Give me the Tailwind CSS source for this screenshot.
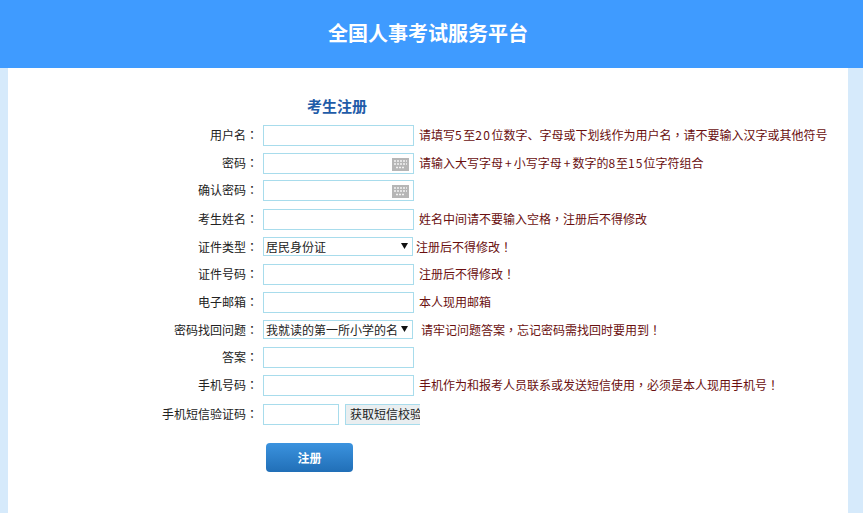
<!DOCTYPE html>
<html lang="zh-CN">
<head>
    <meta charset="UTF-8">
    <title>全国人事考试服务平台</title>
    <script src="https://cdn.jsdelivr.net/npm/@tailwindcss/browser@4"></script>
</head>
<body class="h-[513px] overflow-hidden bg-[#d6eafb] font-['Noto_Sans_CJK_SC',sans-serif] text-[12px] text-[#222]">
    <!-- Header -->
    <div class="h-[68px] bg-[#3f9bff] flex items-center justify-center pr-[7px] pb-[2px]">
        <h1 class="text-[20px] font-bold text-white">全国人事考试服务平台</h1>
    </div>

    <!-- Main panel -->
    <div class="ml-[8px] w-[840px] h-[445px] bg-white">
        <h2 class="pl-[299px] pt-[27px] h-[57px] text-[15px] leading-[22px] font-bold text-[#1f5ca8]">考生注册</h2>

        <form class="flex flex-col">
            <div class="flex items-center h-[21px]">
                <label class="w-[250px] pb-[2px] text-right">用户名<span lang="zh-TW" class="font-['Noto_Sans_CJK_TC']">：</span></label>
                <input type="text" class="ml-[5px] w-[151px] h-[21px] border border-[#a8dcec] outline-none">
                <span class="ml-[5px] pb-[2px] text-[#6a0f0f]">请填写<span class="tracking-[1.500px]">5</span>至<span class="tracking-[1.500px]">20</span>位数字、字母或下划线作为用户名<span lang="zh-TW" class="font-['Noto_Sans_CJK_TC']">，</span>请不要输入汉字或其他符号</span>
            </div>

            <div class="flex items-center h-[21px] mt-[7px]">
                <label class="w-[250px] pb-[2px] text-right">密码<span lang="zh-TW" class="font-['Noto_Sans_CJK_TC']">：</span></label>
                <div class="relative ml-[5px] w-[151px] h-[21px]">
                    <input type="password" class="w-full h-full border border-[#a8dcec] outline-none">
                    <svg class="absolute left-[129px] top-[5px]" width="17" height="13" viewBox="0 0 17 13">
                        <rect width="17" height="13" fill="#b6b6b6"/>
                        <path d="M2 3h13M2 6h13M4 9.500h9" stroke="#f2f2f2" stroke-width="1.500" stroke-dasharray="2 1"/>
                    </svg>
                </div>
                <span class="ml-[5px] pb-[2px] text-[#6a0f0f]">请输入大写字母<span class="tracking-[2px] pl-[2px]">+</span>小写字母<span class="tracking-[2px] pl-[2px]">+</span>数字的<span class="tracking-[1px]">8</span>至<span class="tracking-[1px]">15</span>位字符组合</span>
            </div>

            <div class="flex items-center h-[21px] mt-[6px]">
                <label class="w-[250px] pb-[1px] text-right">确认密码<span lang="zh-TW" class="font-['Noto_Sans_CJK_TC']">：</span></label>
                <div class="relative ml-[5px] w-[151px] h-[21px]">
                    <input type="password" class="w-full h-full border border-[#a8dcec] outline-none">
                    <svg class="absolute left-[129px] top-[5px]" width="17" height="13" viewBox="0 0 17 13">
                        <rect width="17" height="13" fill="#b6b6b6"/>
                        <path d="M2 3h13M2 6h13M4 9.500h9" stroke="#f2f2f2" stroke-width="1.500" stroke-dasharray="2 1"/>
                    </svg>
                </div>
            </div>

            <div class="flex items-center h-[21px] mt-[8px]">
                <label class="w-[250px] pb-[2px] text-right">考生姓名<span lang="zh-TW" class="font-['Noto_Sans_CJK_TC']">：</span></label>
                <input type="text" class="ml-[5px] w-[151px] h-[21px] border border-[#a8dcec] outline-none">
                <span class="ml-[5px] pb-[2px] text-[#6a0f0f]">姓名中间请不要输入空格<span lang="zh-TW" class="font-['Noto_Sans_CJK_TC']">，</span>注册后不得修改</span>
            </div>

            <div class="flex items-center h-[19px] mt-[7px]">
                <label class="w-[250px] text-right">证件类型<span lang="zh-TW" class="font-['Noto_Sans_CJK_TC']">：</span></label>
                <div class="relative ml-[5px] w-[150px] h-[19px]">
                    <select class="appearance-none w-full h-full border border-[#a8dcec] pl-[2px] pr-[15px] pb-[2px] text-[#222] outline-none">
                        <option>居民身份证</option>
                    </select>
                    <svg class="absolute left-[138px] top-[6px]" width="7" height="6" viewBox="0 0 7 6"><path d="M0 0h7L3.500 6z" fill="#111"/></svg>
                </div>
                <span class="ml-[3px] text-[#6a0f0f]">注册后不得修改<span lang="zh-TW" class="font-['Noto_Sans_CJK_TC']">！</span></span>
            </div>

            <div class="flex items-center h-[21px] mt-[8px]">
                <label class="w-[250px] pb-[2px] text-right">证件号码<span lang="zh-TW" class="font-['Noto_Sans_CJK_TC']">：</span></label>
                <input type="text" class="ml-[5px] w-[151px] h-[21px] border border-[#a8dcec] outline-none">
                <span class="ml-[5px] pb-[2px] text-[#6a0f0f]">注册后不得修改<span lang="zh-TW" class="font-['Noto_Sans_CJK_TC']">！</span></span>
            </div>

            <div class="flex items-center h-[21px] mt-[7px]">
                <label class="w-[250px] pb-[1px] text-right">电子邮箱<span lang="zh-TW" class="font-['Noto_Sans_CJK_TC']">：</span></label>
                <input type="text" class="ml-[5px] w-[151px] h-[21px] border border-[#a8dcec] outline-none">
                <span class="ml-[5px] pb-[1px] text-[#6a0f0f]">本人现用邮箱</span>
            </div>

            <div class="flex items-center h-[19px] mt-[7px]">
                <label class="w-[250px] text-right">密码找回问题<span lang="zh-TW" class="font-['Noto_Sans_CJK_TC']">：</span></label>
                <div class="relative ml-[5px] w-[150px] h-[19px]">
                    <select class="appearance-none w-full h-full border border-[#a8dcec] pl-[2px] pr-[15px] text-[#222] outline-none">
                        <option>我就读的第一所小学的名称是什么？</option>
                    </select>
                    <svg class="absolute left-[138px] top-[6px]" width="7" height="6" viewBox="0 0 7 6"><path d="M0 0h7L3.500 6z" fill="#111"/></svg>
                </div>
                <span class="ml-[8px] text-[#6a0f0f]">请牢记问题答案<span lang="zh-TW" class="font-['Noto_Sans_CJK_TC']">，</span>忘记密码需找回时要用到<span lang="zh-TW" class="font-['Noto_Sans_CJK_TC']">！</span></span>
            </div>

            <div class="flex items-center h-[21px] mt-[8px]">
                <label class="w-[250px] pb-[1px] text-right">答案<span lang="zh-TW" class="font-['Noto_Sans_CJK_TC']">：</span></label>
                <input type="text" class="ml-[5px] w-[151px] h-[21px] border border-[#a8dcec] outline-none">
            </div>

            <div class="flex items-center h-[21px] mt-[7px]">
                <label class="w-[250px] pb-[1px] text-right">手机号码<span lang="zh-TW" class="font-['Noto_Sans_CJK_TC']">：</span></label>
                <input type="text" class="ml-[5px] w-[151px] h-[21px] border border-[#a8dcec] outline-none">
                <span class="ml-[5px] pb-[1px] text-[#6a0f0f]">手机作为和报考人员联系或发送短信使用<span lang="zh-TW" class="font-['Noto_Sans_CJK_TC']">，</span>必须是本人现用手机号<span lang="zh-TW" class="font-['Noto_Sans_CJK_TC']">！</span></span>
            </div>

            <div class="flex items-center h-[21px] mt-[8px]">
                <label class="w-[250px] pb-[1px] text-right">手机短信验证码<span lang="zh-TW" class="font-['Noto_Sans_CJK_TC']">：</span></label>
                <input type="text" class="ml-[5px] w-[76px] h-[21px] border border-[#a8dcec] outline-none">
                <button type="button" class="ml-[6px] -mt-[1px] w-[75px] h-[21px] overflow-hidden whitespace-nowrap border border-r-0 border-[#a8dcec] bg-[#e9eef0] pl-[4px] pb-[1px] text-left text-[#222]">获取短信校验码</button>
            </div>

            <button type="submit" class="ml-[258px] mt-[18px] w-[87px] h-[29px] rounded-[4px] bg-gradient-to-b from-[#3b93df] to-[#216fb7] text-white font-bold">注册</button>
        </form>
    </div>
</body>
</html>
